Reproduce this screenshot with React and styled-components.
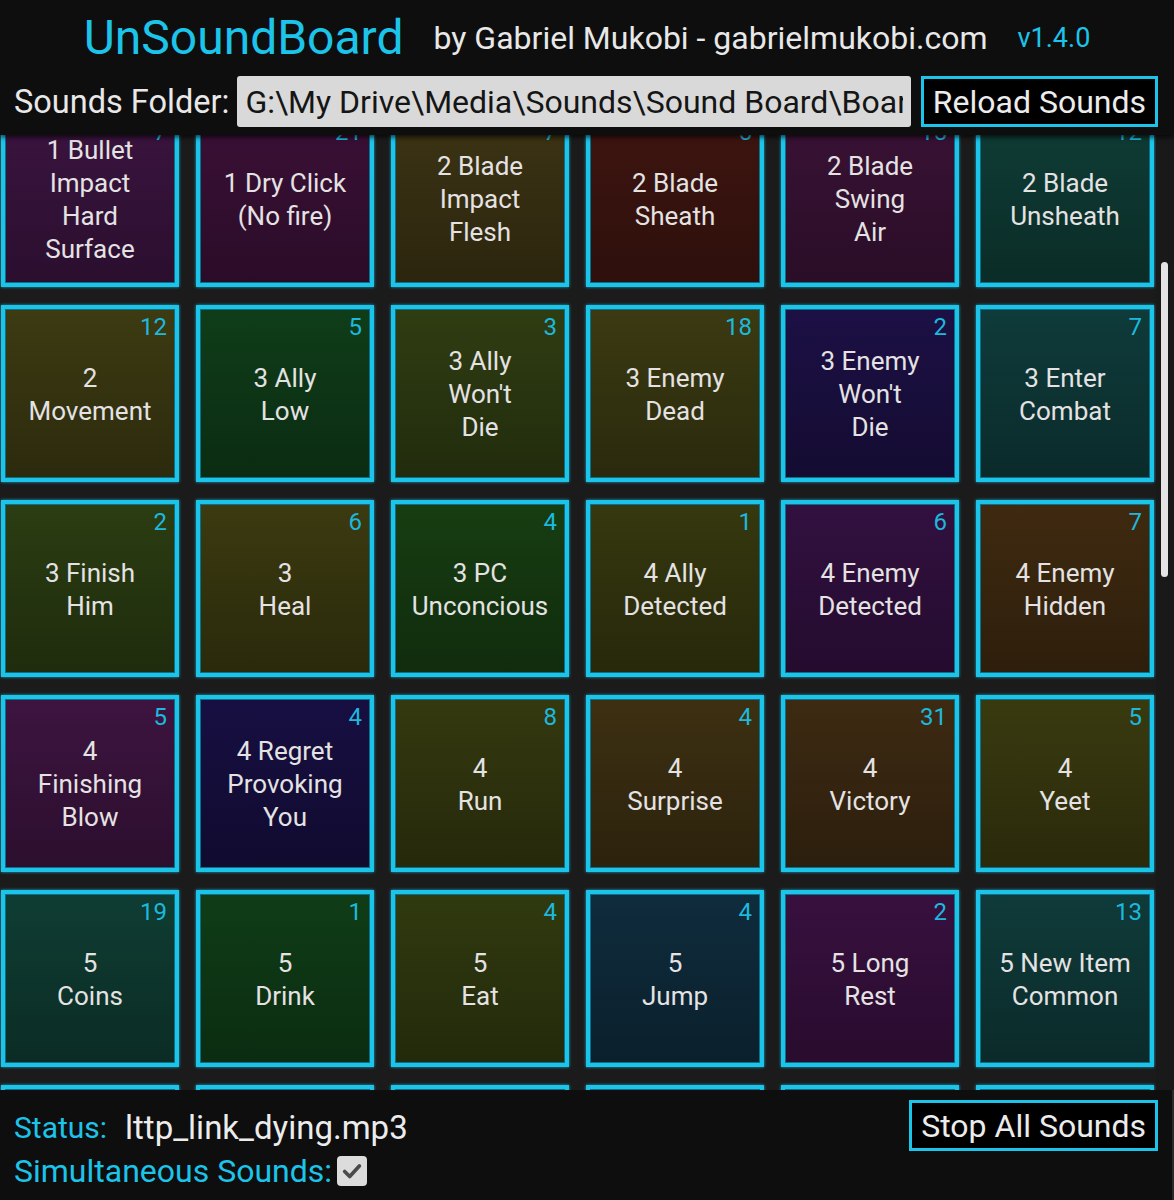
import React from "react";
import styled, { createGlobalStyle } from "styled-components";

const CYAN = "#1cc4ea";
const FONT = `Roboto, "Noto Sans", "Liberation Sans", sans-serif`;

const Global = createGlobalStyle`
  html, body { margin: 0; padding: 0; background: #0e0e0e; }
  body { font-family: ${FONT}; }
  #root { height: 1200px; }
`;

const Shell = styled.div`
  height: 1200px;
  display: flex;
  flex-direction: column;
  background: #0e0e0e;
  overflow: hidden;
`;

const Header = styled.header`
  flex: 0 0 135px;
  display: flex;
  flex-direction: column;
  background: #0e0e0e;
  position: relative;
  z-index: 1;
  box-shadow: 0 2px 5px rgba(0, 0, 0, 0.75);
`;

const TitleRow = styled.div`
  height: 76px;
  display: flex;
  align-items: center;
  justify-content: center;
  gap: 30px;
`;

const Title = styled.h1`
  margin: 0;
  font-size: 48px;
  font-weight: 400;
  color: ${CYAN};
  line-height: 1;
`;

const Byline = styled.span`
  font-size: 32px;
  color: #e8e8e8;
  line-height: 1;
`;

const Version = styled.span`
  font-size: 27px;
  color: ${CYAN};
  line-height: 1;
`;

const FolderRow = styled.div`
  height: 51px;
  display: flex;
  align-items: stretch;
  padding: 0 16px 0 14px;
`;

const Label = styled.label`
  font-size: 32.5px;
  color: #e8e8e8;
  display: flex;
  align-items: center;
  margin-right: 8px;
  white-space: nowrap;
`;

const PathInput = styled.input`
  flex: 1;
  min-width: 0;
  border: none;
  border-radius: 3px;
  background: #d9d9d9;
  color: #151515;
  font-family: ${FONT};
  font-size: 32px;
  padding: 0 8px;
  outline: none;
  margin-right: 10px;
`;

const OutlineButton = styled.button`
  background: #000;
  border: 3px solid ${CYAN};
  color: #ececec;
  font-family: ${FONT};
  font-size: 32px;
  line-height: 1;
  padding: 0 9px;
  height: 51px;
  white-space: nowrap;
  cursor: pointer;
`;

const Board = styled.main`
  flex: 1;
  display: flex;
  background: #1b1b1b;
  min-height: 0;
`;

const Viewport = styled.div`
  flex: 1;
  overflow: hidden;
`;

const Grid = styled.div`
  display: grid;
  grid-template-columns: repeat(6, 178px);
  grid-auto-rows: 177px;
  gap: 18px 17px;
  padding-left: 1px;
  margin-top: -25px;
`;

const ScrollTrack = styled.div`
  flex: 0 0 18px;
  background: #191919;
`;

const Thumb = styled.div`
  margin: 127px 6px 0 5px;
  height: 315px;
  background: #e4e4e4;
  border-radius: 4px;
`;

const Pad = styled.div`
  position: relative;
  box-sizing: border-box;
  border: 4px solid ${CYAN};
  box-shadow: inset 0 0 0 1px #0d6f88, 0 0 3px rgba(28, 196, 234, 0.8);
  background: linear-gradient(
    to bottom,
    ${(p) => p.$c},
    color-mix(in srgb, ${(p) => p.$c} 72%, black)
  );
  display: flex;
  align-items: center;
  justify-content: center;
  text-align: center;
  cursor: pointer;
`;

const PadLabel = styled.span`
  font-size: 26px;
  line-height: 33px;
  color: #e4e2e2;
  white-space: pre-line;
  margin-top: 2px;
`;

const Count = styled.span`
  position: absolute;
  top: 3px;
  right: 8px;
  font-size: 24px;
  line-height: 30px;
  color: #1db8dc;
`;

const Footer = styled.footer`
  flex: 0 0 110px;
  display: flex;
  justify-content: space-between;
  align-items: flex-start;
  padding: 0 14px 0 14px;
  background: #0e0e0e;
  border-right: 2px solid #2a2a2a;
  box-sizing: border-box;
`;

const FooterInfo = styled.div`
  padding-top: 16px;
  display: flex;
  flex-direction: column;
`;

const InfoLine = styled.div`
  display: flex;
  align-items: center;
  height: 43px;
  line-height: 1;
  white-space: nowrap;
`;

const Key = styled.span`
  color: ${CYAN};
  font-size: ${(p) => p.$size || 32}px;
  margin-right: ${(p) => p.$gap || 0}px;
`;

const Value = styled.span`
  color: #ececec;
  font-size: 33px;
`;

const CheckBox = styled.span`
  width: 30px;
  height: 30px;
  border-radius: 4px;
  background: #dcdcdc;
  display: inline-flex;
  align-items: center;
  justify-content: center;
  margin-left: 5px;
`;

const StopWrap = styled.div`
  padding-top: 10px;
`;

const pads = [
  ["1 Bullet\nImpact\nHard\nSurface", 7, "#3b1440"],
  ["1 Dry Click\n(No fire)", 21, "#3b1037"],
  ["2 Blade\nImpact\nFlesh", 7, "#3d3414"],
  ["2 Blade\nSheath", 5, "#3f1510"],
  ["2 Blade\nSwing\nAir", 15, "#3a1236"],
  ["2 Blade\nUnsheath", 12, "#0f3d36"],

  ["2\nMovement", 12, "#3d3b12"],
  ["3 Ally\nLow", 5, "#0f3d19"],
  ["3 Ally\nWon't\nDie", 3, "#2f3d12"],
  ["3 Enemy\nDead", 18, "#3b3a12"],
  ["3 Enemy\nWon't\nDie", 2, "#1c1045"],
  ["3 Enter\nCombat", 7, "#0f3b3b"],

  ["3 Finish\nHim", 2, "#2b3d12"],
  ["3\nHeal", 6, "#3b3a10"],
  ["3 PC\nUnconcious", 4, "#173d12"],
  ["4 Ally\nDetected", 1, "#36380f"],
  ["4 Enemy\nDetected", 6, "#321040"],
  ["4 Enemy\nHidden", 7, "#3f2a10"],

  ["4\nFinishing\nBlow", 5, "#3d1440"],
  ["4 Regret\nProvoking\nYou", 4, "#170f42"],
  ["4\nRun", 8, "#34390f"],
  ["4\nSurprise", 4, "#3d3012"],
  ["4\nVictory", 31, "#3d2a12"],
  ["4\nYeet", 5, "#3a3a10"],

  ["5\nCoins", 19, "#0f3d33"],
  ["5\nDrink", 1, "#0f3d17"],
  ["5\nEat", 4, "#303a0f"],
  ["5\nJump", 4, "#0f2c3d"],
  ["5 Long\nRest", 2, "#38103f"],
  ["5 New Item\nCommon", 13, "#0f3b3a"],

  ["5 New Item\nRare", 6, "#3b1440"],
  ["5 Open\nChest", 3, "#0f3d19"],
  ["5\nPickup", 9, "#3d3414"],
  ["5\nPoison", 2, "#173d12"],
  ["5 Short\nRest", 4, "#321040"],
  ["6 Door\nOpen", 8, "#0f3b3b"],
];

function Check() {
  return (
    <svg width="22" height="22" viewBox="0 0 24 24" aria-hidden="true">
      <path
        d="M4 12.5 L9.5 18 L20 6.5"
        fill="none"
        stroke="#4a4a4a"
        strokeWidth="4"
        strokeLinecap="round"
        strokeLinejoin="round"
      />
    </svg>
  );
}

export default function App() {
  return (
    <Shell>
      <Global />
      <Header>
        <TitleRow>
          <Title>UnSoundBoard</Title>
          <Byline>by Gabriel Mukobi - gabrielmukobi.com</Byline>
          <Version>v1.4.0</Version>
        </TitleRow>
        <FolderRow>
          <Label htmlFor="folder">Sounds Folder:</Label>
          <PathInput
            id="folder"
            readOnly
            value={"G:\\My Drive\\Media\\Sounds\\Sound Board\\Boards\\D&D"}
          />
          <OutlineButton>Reload Sounds</OutlineButton>
        </FolderRow>
      </Header>

      <Board>
        <Viewport>
          <Grid>
            {pads.map(([name, count, color], i) => (
              <Pad key={i} $c={color}>
                <Count>{count}</Count>
                <PadLabel>{name}</PadLabel>
              </Pad>
            ))}
          </Grid>
        </Viewport>
        <ScrollTrack>
          <Thumb />
        </ScrollTrack>
      </Board>

      <Footer>
        <FooterInfo>
          <InfoLine>
            <Key $gap={18} $size={30}>Status:</Key>
            <Value>lttp_link_dying.mp3</Value>
          </InfoLine>
          <InfoLine>
            <Key $size={32}>Simultaneous Sounds:</Key>
            <CheckBox>
              <Check />
            </CheckBox>
          </InfoLine>
        </FooterInfo>
        <StopWrap>
          <OutlineButton>Stop All Sounds</OutlineButton>
        </StopWrap>
      </Footer>
    </Shell>
  );
}
